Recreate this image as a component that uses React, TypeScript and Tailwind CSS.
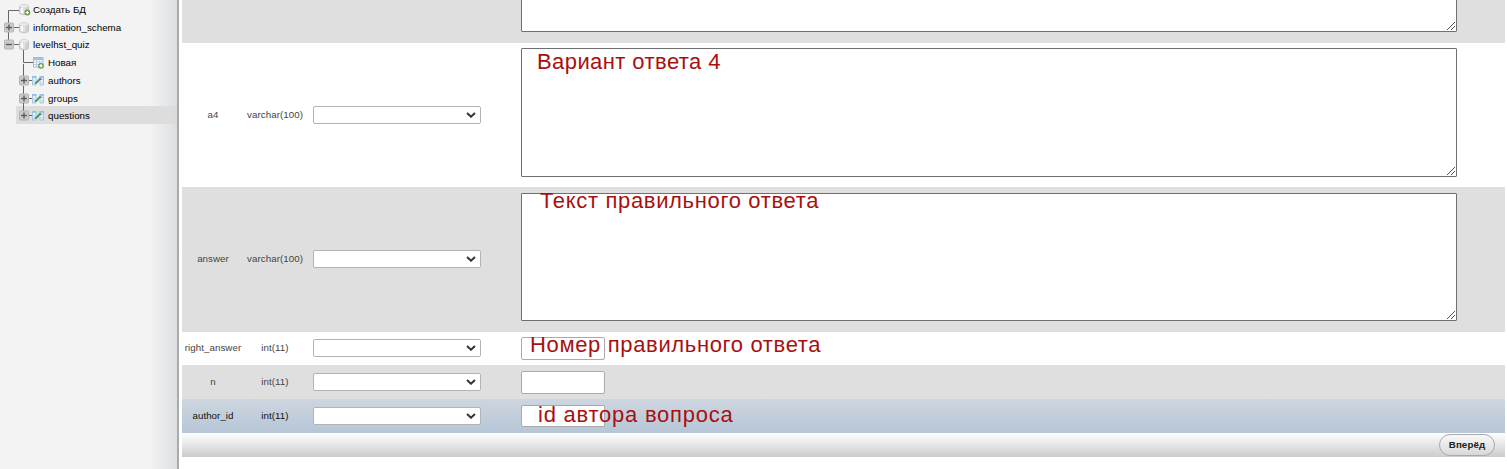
import React from "react";

function Box({ x, minus }: { x: number; minus?: boolean }) {
  return (
    <g>
      <rect x={x + 0.5} y="4" width="9" height="9" rx="1" fill="#cbcbcb" stroke="#b3b3b3" />
      <path d={`M${x + 2} 8.5h6`} stroke="#5c5c5c" strokeWidth="1.4" />
      {!minus && <path d={`M${x + 5} 5.5v6`} stroke="#5c5c5c" strokeWidth="1.4" />}
    </g>
  );
}

function Add({ x, y }: { x: number; y: number }) {
  return (
    <g>
      <circle cx={x} cy={y} r="2.9" fill="#6a9a45" />
      <path d={`M${x - 1.7} ${y}h3.4M${x} ${y - 1.7}v3.4`} stroke="#fff" strokeWidth="1.2" />
    </g>
  );
}

function Db({ add }: { add?: boolean }) {
  return (
    <g>
      <path d="M19.5 5.4C19.5 3.3 28.5 3.3 28.5 5.4V12C28.5 14.2 19.5 14.2 19.5 12Z" fill="#cfcfcf" stroke="#bcbcbc" strokeWidth=".8" />
      <path d="M20.6 6.8h2.6v6c-1.4-.1-2.6-.5-2.6-1z" fill="#fafafa" />
      <path d="M23.2 6.8h2v6h-2z" fill="#e2e2e2" />
      <ellipse cx="24" cy="5.3" rx="4.1" ry="1.3" fill="#ececec" />
      {add && <Add x={27.3} y={11.5} />}
    </g>
  );
}

function NewTable() {
  return (
    <g>
      <rect x="33.5" y="3.5" width="9.5" height="9.5" fill="#f5faff" stroke="#a0bfda" />
      <path d="M34 5h9" stroke="#9fc3e4" strokeWidth="2" />
      <path d="M34 8h9M34 10.5h9M36.5 6v7M39.8 6v7" stroke="#b0c8de" strokeWidth=".8" />
      <Add x={41} y={11.8} />
    </g>
  );
}

function Relation() {
  return (
    <g>
      <path d="M32.5 4.5h3.5v8.5h-3.5zM40 4.5h3.5V13H40z" fill="#e4f0fa" stroke="#9cc2e2" strokeWidth=".9" />
      <path d="M32 5h4.5M39.5 5H44" stroke="#8fbbe0" strokeWidth="1.6" />
      <path d="M33 11.8h2.5M40.5 7.5H43M33 9h2M41 11h2" stroke="#a9cbe6" strokeWidth=".8" />
      <path d="M34.8 10.9h1.6l3.2-3.8h1.8" fill="none" stroke="#4f8f60" strokeWidth="1.9" />
    </g>
  );
}

type Kind = "create" | "db" | "open" | "new" | "table";

const tree: { label: string; kind: Kind; height: string; indent: string; selected?: boolean }[] = [
  { label: "Создать БД", kind: "create", height: "h-[18px]", indent: "pl-[33px]" },
  { label: "information_schema", kind: "db", height: "h-[17px]", indent: "pl-[33px]" },
  { label: "levelhst_quiz", kind: "open", height: "h-[18px]", indent: "pl-[33px]" },
  { label: "Новая", kind: "new", height: "h-[18px]", indent: "pl-[48px]" },
  { label: "authors", kind: "table", height: "h-[18px]", indent: "pl-[48px]" },
  { label: "groups", kind: "table", height: "h-[17px]", indent: "pl-[48px]" },
  { label: "questions", kind: "table", height: "h-[18px]", indent: "pl-[48px]", selected: true },
];

function TreeGlyph({ kind }: { kind: Kind }) {
  return (
    <svg className="absolute left-0 top-0 overflow-visible" width="46" height="18" fill="none">
      {kind === "create" && (<><path d="M19 9.5H8.5V22" stroke="#666" /><Db add /></>)}
      {kind === "db" && (<><path d="M14 8.5h5M8.5 13v9" stroke="#666" /><Box x={4} /><Db /></>)}
      {kind === "open" && (<><path d="M14 8.5h5M23.5 14v12" stroke="#666" /><Box x={4} minus /><Db /></>)}
      {kind === "new" && (<><path d="M23.5 0v8.5H33M23.5 10v12" stroke="#666" /><NewTable /></>)}
      {kind === "table" && (<><path d="M29 8.5h3M23.5-4v8" stroke="#666" /><Box x={19} /><Relation /></>)}
    </svg>
  );
}

function Sidebar() {
  return (
    <aside className="h-full w-[179px] shrink-0 border-r-2 border-[#aaa] bg-[linear-gradient(to_right,#f3f3f3_0,#f3f3f3_150px,#dcdfe2_177px)] pt-px">
      {tree.map((t) => (
        <div key={t.label} className={`relative flex items-center ${t.height} ${t.indent}`}>
          {t.selected && <div className="absolute -top-px bottom-px left-4 right-0 bg-[linear-gradient(to_right,#dddddd_0,#dddddd_154px,#d9dadb_161px)]" />}
          <TreeGlyph kind={t.kind} />
          <span className="relative text-[9.75px] leading-none tracking-[0.02px] text-black">{t.label}</span>
        </div>
      ))}
    </aside>
  );
}

function FunctionSelect() {
  return (
    <div className="flex h-[18px] w-[168px] items-center justify-end rounded-[2px] border border-[#b3b3b3] bg-white pr-1">
      <svg width="10" height="6" viewBox="0 0 10 6" fill="none">
        <path d="M1 1l4 3.7L9 1" stroke="#333" strokeWidth="2" />
      </svg>
    </div>
  );
}

function Area({ height }: { height: string }) {
  return (
    <div className={`flex w-[936px] items-end justify-end rounded-[1px] border border-[#707070] bg-white ${height}`}>
      <svg width="10" height="10" fill="none">
        <path d="M1 9l8-8M5 9l4-4" stroke="#555" />
      </svg>
    </div>
  );
}

function Note({ className, children }: { className: string; children: React.ReactNode }) {
  return (
    <span className={`absolute whitespace-nowrap text-[22px] leading-[26px] text-[#a81010] ${className}`}>{children}</span>
  );
}

function Row({ name, type, className, field, selectClass = "", children }: { name: string; type: string; className: string; field: string; selectClass?: string; children: React.ReactNode }) {
  return (
    <div className={`relative flex items-center text-[9.75px] text-[#444] ${className}`}>
      <div className="w-[62px] whitespace-nowrap text-center tracking-[0.05px]">{name}</div>
      <div className="w-[62px] whitespace-nowrap text-center tracking-[0.05px]">{type}</div>
      <div className={`w-[215px] pl-[7px] ${selectClass}`}><FunctionSelect /></div>
      <div className={`self-start ${field}`}>{children}</div>
    </div>
  );
}

function TextInput({ height = "h-[23px]" }: { height?: string }) {
  return <div className={`w-[84px] rounded-[2px] border border-[#aaa] bg-white ${height}`} />;
}

export default function App() {
  return (
    <div className="flex h-[469px] w-[1507px] overflow-hidden bg-white font-['Liberation_Sans',Arial,sans-serif]">
      <Sidebar />
      <main className="ml-[3px] w-[1323px]">
        <div className="flex h-[43px] bg-[#dfdfdf] pl-[339px]">
          <div className="-mt-px"><Area height="h-[33px]" /></div>
        </div>
        <Row name="a4" type="varchar(100)" className="h-36" field="pt-[5px]">
          <Area height="h-[129px]" />
          <Note className="left-[355px] top-[6px] tracking-[0.42px]">Вариант ответа 4</Note>
        </Row>
        <Row name="answer" type="varchar(100)" className="h-[145px] bg-[#dfdfdf]" field="pt-[6px]" selectClass="pb-px">
          <Area height="h-[128px]" />
          <Note className="left-[358px] top-[1px] tracking-[0.66px]">Текст правильного ответа</Note>
        </Row>
        <Row name="right_answer" type="int(11)" className="h-[33px]" field="pt-[5px]" selectClass="pb-px">
          <TextInput />
          <Note className="left-[348px] top-0 tracking-[0.65px]">Номер правильного ответа</Note>
        </Row>
        <Row name="n" type="int(11)" className="h-[34px] bg-[#dfdfdf]" field="pt-[6px]">
          <TextInput />
        </Row>
        <Row name="author_id" type="int(11)" className="h-[34px] bg-linear-to-b from-[#ced6df] to-[#b6c6d7] !text-[#111]" field="pt-[6px]">
          <TextInput height="h-[22px]" />
          <Note className="left-[356px] top-[3px] tracking-[0.76px]">id автора вопроса</Note>
        </Row>
        <div className="flex h-6 justify-end bg-linear-to-b from-white to-[#cccccc] pr-[10px] pt-px">
          <button className="h-[22px] w-14 rounded-full border border-[#aaa] bg-linear-to-b from-[#f8f8f8] to-[#d8d8d8] text-[9.75px] font-bold leading-none tracking-[0.1px] text-[#222]">Вперёд</button>
        </div>
      </main>
    </div>
  );
}
